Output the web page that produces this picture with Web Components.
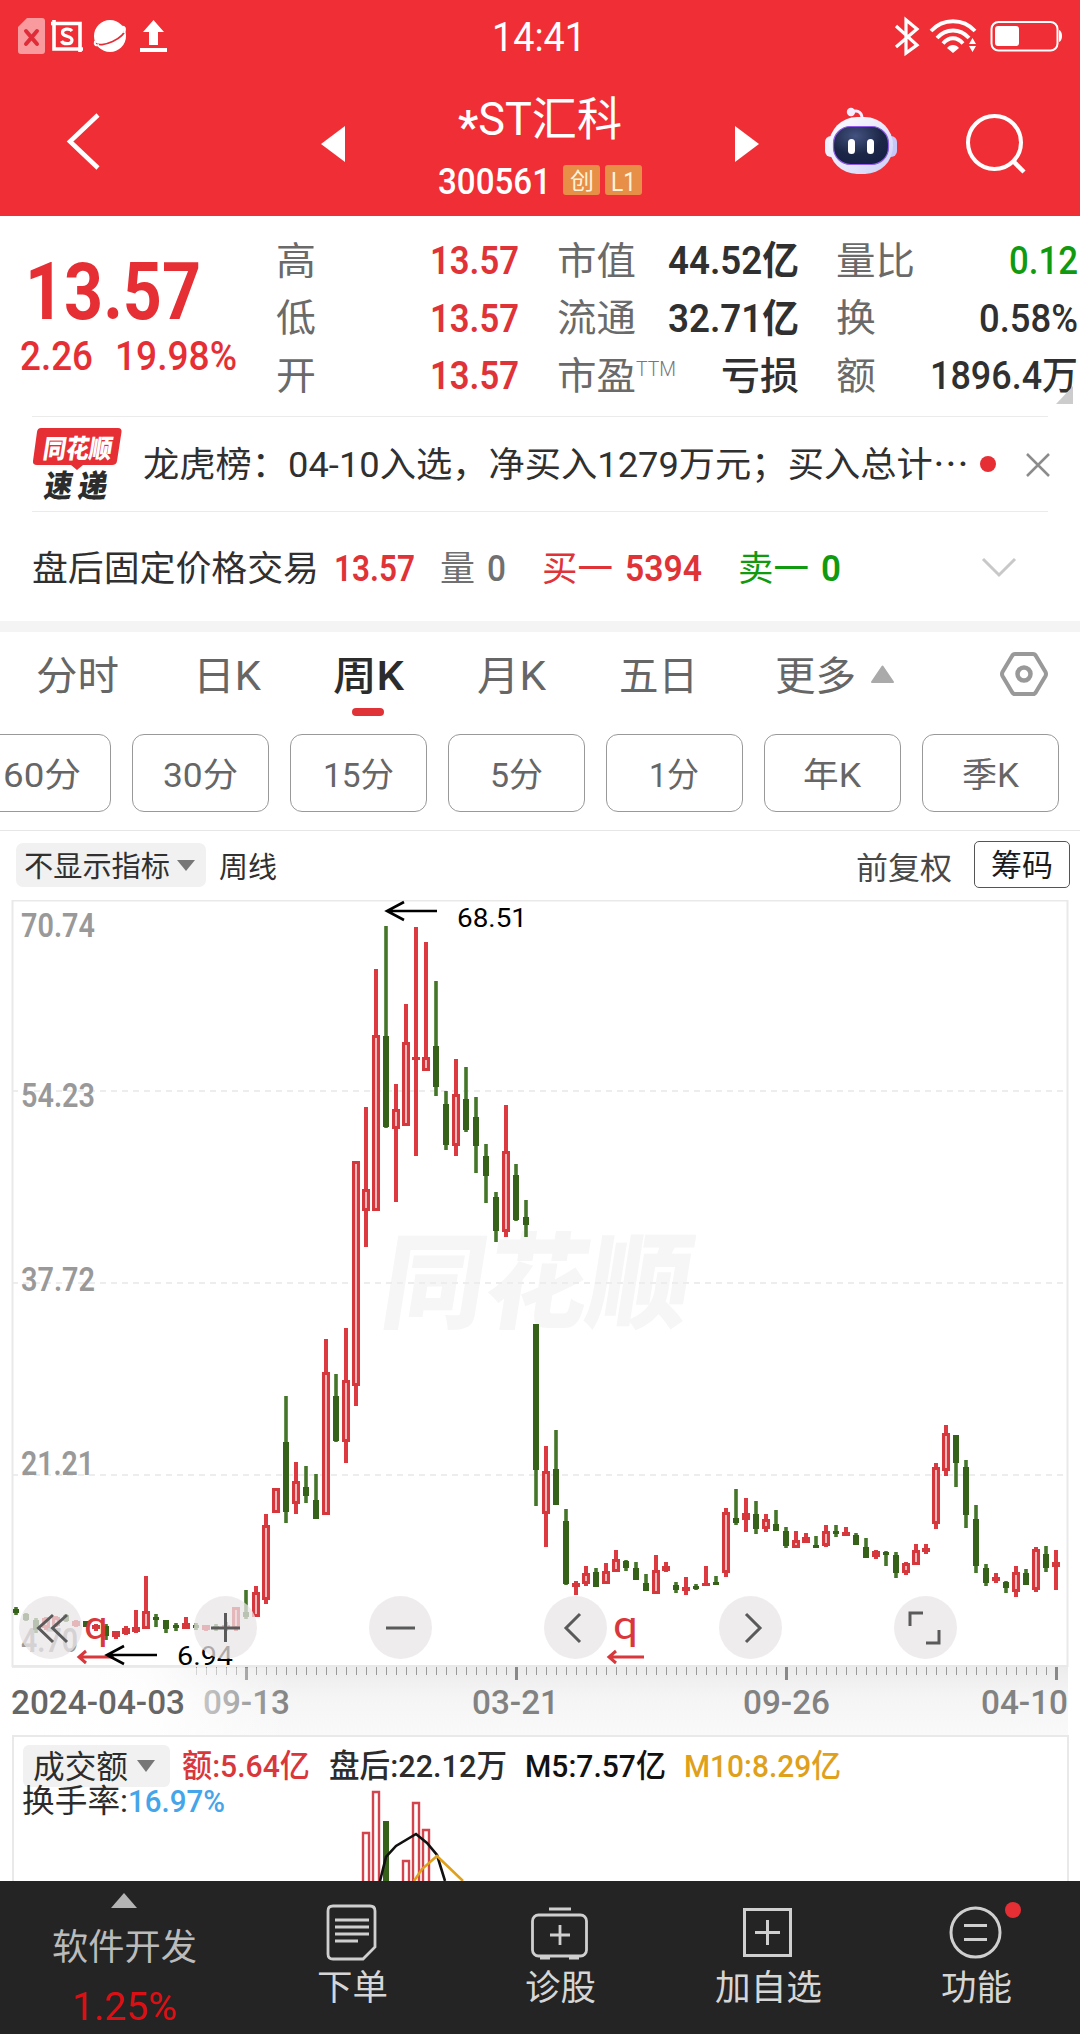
<!DOCTYPE html>
<html lang="zh-CN">
<head>
<meta charset="utf-8">
<title>*ST汇科 300561</title>
<style>
  body {
    margin: 0;
    width: 1080px;
    height: 2034px;
    overflow: hidden;
    background: #fff;
    color: #303030;
    font-family: Roboto, "Noto Sans CJK SC", sans-serif;
  }
</style>
</head>
<body>
<stock-page></stock-page>

<script>
/**
 *
 * FitText
 *  - Element: fit-text
 *  - Description: one line of text set to a fixed advance width
 *  - Attributes: w (width), s (font size), wt (font weight), x (left margin)
 *
 */
class FitText extends HTMLElement {

  connectedCallback() {
    const w = Number(this.getAttribute('w'));
    const size = Number(this.getAttribute('s') || 36);
    const weight = this.getAttribute('wt') || 400;
    const left = this.getAttribute('x') || 0;
    const h = Math.round(size * 1.2);
    const baseline = h / 2 + size * 0.385;

    const shadowRoot = this.attachShadow({mode: 'open'});
    shadowRoot.innerHTML = `
      <style>
        :host { display: block; flex: none; width: ${w}px; height: ${h}px; margin-left: ${left}px; }
        svg { display: block; overflow: visible; }
        text { fill: currentColor; font-size: ${size}px; font-weight: ${weight}; }
      </style>
      <svg width="${w}" height="${h}">
        <text y="${baseline}" textLength="${w}" lengthAdjust="spacingAndGlyphs">${this.innerHTML}</text>
      </svg>
    `;
  }

}
customElements.define('fit-text', FitText);

/**
 *
 * StatusBar
 *  - Element: status-bar
 *  - Description: phone status bar with clock
 *
 */
class StatusBar extends HTMLElement {

  constructor() {
    super();
    this.attachShadow({mode: 'open'}).innerHTML = `
      <style>
        :host { display: flex; align-items: center; height: 72px; color: #fff; }
        svg { display: block; flex: none; }
      </style>
      <svg width="172" height="72" viewBox="0 0 172 72" fill="none">
        <path d="M27 18H42a3 3 0 0 1 3 3V51a3 3 0 0 1-3 3H21a3 3 0 0 1-3-3V27Z" fill="#f89a9e"/>
        <path d="M26 31 37 44M37 31 26 44" stroke="#e02c38" stroke-width="4" stroke-linecap="round"/>
        <path d="M51 23.500H80V52M54 20V49H83" stroke="#fff" stroke-width="3.600"/>
        <path d="M72 31C70 28 62 28.500 62.500 33C63 37 72 35.500 72 40C72 45 63 44.500 61.500 41" stroke="#fff" stroke-width="3.200"/>
        <circle cx="110" cy="36" r="16" fill="#fff"/>
        <path d="M95 43c5 6 32-5 30-15" stroke="#e52c36" stroke-width="1.800"/>
        <path d="M120 27c5-1 6 1 4 6M95 41c-1 4 1 5 4 4" stroke="#fff" stroke-width="2"/>
        <path d="M153.500 20 164 32H158V45H149V32H143Z" fill="#fff"/>
        <path d="M140 50H167" stroke="#fff" stroke-width="4"/>
      </svg>
      <fit-text x="320" w="94" s="40">14:41</fit-text>
      <svg style="margin-left:294px" width="200" height="72" viewBox="880 0 200 72" fill="none" stroke="#fff">
        <path d="M896 26 917 45 906 53V20L917 29 896 47" stroke-width="3.200" stroke-linejoin="miter"/>
        <g stroke-width="3.800">
          <path d="M931 31C943 18 963 18 975 31"/>
          <path d="M937 38C946 28 960 28 969 38"/>
          <path d="M943 43.500C949 36.500 957 36.500 963 43.500"/>
        </g>
        <path d="M947 48C950 44 956 44 959 48L953 53Z" fill="#fff" stroke="none"/>
        <path d="M969 44 972.500 38 976 44ZM969 46 972.500 52 976 46Z" fill="#fff" stroke="none"/>
        <rect x="991.500" y="22" width="66" height="28.500" rx="7" stroke-width="2"/>
        <rect x="995" y="26" width="24" height="20" rx="3" fill="#fff" stroke="none"/>
        <path d="M1059 30C1063 31 1063 41 1059 42Z" fill="#fff" stroke="none"/>
      </svg>
    `;
  }

}
customElements.define('status-bar', StatusBar);

/**
 *
 * StockHeader
 *  - Element: stock-header
 *  - Description: red title bar, name and code are slotted
 *
 */
class StockHeader extends HTMLElement {

  constructor() {
    super();
    this.attachShadow({mode: 'open'}).innerHTML = `
      <style>
        :host { display: block; height: 216px; background: #ef2f35; color: #fff; }
        .bar { display: flex; height: 144px; align-items: flex-start; }
        svg { display: block; flex: none; }
        .title { width: 390px; display: flex; flex-direction: column; align-items: center; padding-top: 18px; box-sizing: border-box; }
        .code { display: flex; align-items: center; gap: 5px; margin-top: 13px; }
        .badge { display: flex; align-items: center; justify-content: center; width: 37px; height: 30px; border-radius: 3px; background: #e78f47; color: #fff3dc; }
        .badge:first-of-type { margin-left: 7px; }
      </style>
      <status-bar></status-bar>
      <div class="bar">
        <svg width="345" height="144" viewBox="0 72 345 144">
          <path d="M98 115 70 141.500 98 168" fill="none" stroke="#fff" stroke-width="4.500"/>
          <path d="M345 126V162L321 144Z" fill="#fff"/>
        </svg>
        <div class="title">
          <slot name="name"></slot>
          <div class="code">
            <slot name="code"></slot>
            <span class="badge"><fit-text w="24" s="23">创</fit-text></span>
            <span class="badge"><fit-text w="25" s="26">L1</fit-text></span>
          </div>
        </div>
        <svg width="345" height="144" viewBox="735 72 345 144">
          <defs>
            <linearGradient id="shell" x1="0" y1="0" x2="1" y2="1">
              <stop offset="0" stop-color="#fff"/><stop offset=".6" stop-color="#e4e4fb"/><stop offset="1" stop-color="#c8cdf5"/>
            </linearGradient>
            <radialGradient id="visor" cx=".4" cy=".25" r=".8">
              <stop offset="0" stop-color="#43527f"/><stop offset=".6" stop-color="#1c2747"/><stop offset="1" stop-color="#161f45"/>
            </radialGradient>
          </defs>
          <path d="M735 126V162L759 144Z" fill="#fff"/>
          <circle cx="851" cy="112" r="4.200" fill="#f6ecff"/>
          <path d="M852 112C858 109 863 113 862 121" fill="none" stroke="#f6ecff" stroke-width="3"/>
          <rect x="825" y="136" width="12" height="21" rx="6" fill="#eef0fc"/>
          <rect x="885" y="136" width="12" height="21" rx="6" fill="#c5c8f8"/>
          <rect x="829" y="117" width="64" height="57" rx="28" fill="url(#shell)"/>
          <rect x="833.500" y="126.500" width="55" height="38" rx="17" fill="url(#visor)" stroke="#8f5be8" stroke-width="1.200"/>
          <rect x="848" y="139" width="7" height="15" rx="3.500" fill="#fff"/>
          <rect x="867" y="139" width="7" height="15" rx="3.500" fill="#fff"/>
          <circle cx="994.500" cy="142.500" r="26.500" fill="none" stroke="#fff" stroke-width="4"/>
          <path d="M1013 161 1024 172" stroke="#fff" stroke-width="4.500"/>
        </svg>
      </div>
    `;
  }

}
customElements.define('stock-header', StockHeader);

/**
 *
 * QuoteStats
 *  - Element: quote-stats
 *  - Description: last price and the table of day figures
 *
 */
class QuoteStats extends HTMLElement {

  constructor() {
    super();
    this.attachShadow({mode: 'open'}).innerHTML = `
      <style>
        :host { display: flex; height: 200px; position: relative; }
        .last { width: 276px; color: #e62f34; padding-top: 24px; box-sizing: border-box; }
        .change { display: flex; margin-top: -5px; }
        .table { display: grid; grid-template-rows: repeat(3, 57.5px); grid-template-columns: 243px 38px 242px 37px 242px; padding-top: 14px; }
        .cell { display: flex; align-items: center; justify-content: space-between; color: #303030; }
        .cell fit-text:first-child { color: #6a6a6a; }
        .up { color: #e03338; }
        .down { color: #109a10; }
        .sup { align-self: flex-start; margin: 10px auto 0 0; color: #777; }
        .corner { position: absolute; left: 1056px; top: 170px; width: 17px; height: 18px; background: #ccc; clip-path: polygon(100% 0, 100% 100%, 0 100%); }
      </style>
      <div class="last">
        <fit-text x="25" w="176" s="80" wt="700">13.57</fit-text>
        <div class="change">
          <fit-text x="20" w="73" s="40" wt="500">2.26</fit-text>
          <fit-text x="22" w="122" s="40" wt="500">19.98%</fit-text>
        </div>
      </div>
      <div class="table">
        <div class="cell"><fit-text w="40" s="38">高</fit-text><fit-text class="up" w="89" s="39" wt="600">13.57</fit-text></div><i></i>
        <div class="cell"><fit-text w="79" s="38">市值</fit-text><fit-text w="131" s="39" wt="600">44.52亿</fit-text></div><i></i>
        <div class="cell"><fit-text w="79" s="38">量比</fit-text><fit-text class="down" w="69" s="39" wt="500">0.12</fit-text></div>
        <div class="cell"><fit-text w="40" s="38">低</fit-text><fit-text class="up" w="89" s="39" wt="600">13.57</fit-text></div><i></i>
        <div class="cell"><fit-text w="79" s="38">流通</fit-text><fit-text w="131" s="39" wt="600">32.71亿</fit-text></div><i></i>
        <div class="cell"><fit-text w="40" s="38">换</fit-text><fit-text w="99" s="39" wt="500">0.58%</fit-text></div>
        <div class="cell"><fit-text w="40" s="38">开</fit-text><fit-text class="up" w="89" s="39" wt="600">13.57</fit-text></div><i></i>
        <div class="cell"><fit-text w="79" s="38">市盈</fit-text><fit-text class="sup" w="40" s="21" wt="300">TTM</fit-text><fit-text w="78" s="38" wt="500">亏损</fit-text></div><i></i>
        <div class="cell"><fit-text w="40" s="38">额</fit-text><fit-text w="148" s="39" wt="500">1896.4万</fit-text></div>
      </div>
      <div class="corner"></div>
    `;
  }

}
customElements.define('quote-stats', QuoteStats);

/**
 *
 * NewsStrip
 *  - Element: news-strip
 *  - Description: one line express news, headline is slotted
 *
 */
class NewsStrip extends HTMLElement {

  constructor() {
    super();
    this.attachShadow({mode: 'open'}).innerHTML = `
      <style>
        :host { display: flex; align-items: center; margin: 0 32px; height: 94px; border: solid #ebebeb; border-width: 1px 0; }
        svg { display: block; flex: none; }
      </style>
      <svg width="90" height="94" viewBox="32 417 90 94">
        <path d="M41 428H118Q122 428 121.500 432L117 461Q116.500 465 112 465H83L77 470 71 465H37Q32.500 465 33 461L37 432Q37.500 428 41 428Z" fill="#e62f34"/>
        <g font-weight="900">
          <text transform="translate(42 458) skewX(-9)" font-size="26" textLength="69" lengthAdjust="spacingAndGlyphs" fill="#fff">同花顺</text>
          <text transform="translate(43 497) skewX(-9)" font-size="31" textLength="28" lengthAdjust="spacingAndGlyphs" fill="#2c2c2c">速</text>
          <text transform="translate(77 497) skewX(-9)" font-size="31" textLength="29" lengthAdjust="spacingAndGlyphs" fill="#2c2c2c">递</text>
        </g>
      </svg>
      <slot></slot>
      <svg style="margin-left:9px" width="82" height="94" viewBox="978 417 82 94">
        <circle cx="988" cy="464" r="8" fill="#e62f34"/>
        <path d="M1027 454 1049 476M1049 454 1027 476" stroke="#8c8c8c" stroke-width="2.500"/>
      </svg>
    `;
  }

}
customElements.define('news-strip', NewsStrip);

/**
 *
 * AfterHours
 *  - Element: after-hours
 *  - Description: after-hours fixed price trading line
 *
 */
class AfterHours extends HTMLElement {

  constructor() {
    super();
    this.attachShadow({mode: 'open'}).innerHTML = `
      <style>
        :host { display: flex; align-items: center; height: 109px; padding-top: 2px; box-sizing: border-box; }
        .up { color: #e03338; }
        .down { color: #109a10; }
        .muted { color: #707070; }
        svg { display: block; margin-left: 140px; }
      </style>
      <fit-text x="32" w="287" s="35.5">盘后固定价格交易</fit-text>
      <fit-text class="up" x="15" w="81" s="36" wt="600">13.57</fit-text>
      <fit-text class="muted" x="25" w="35" s="35">量</fit-text>
      <fit-text class="muted" x="12" w="19" s="36" wt="500">0</fit-text>
      <fit-text class="up" x="36" w="71" s="35">买一</fit-text>
      <fit-text class="up" x="12" w="77" s="36" wt="600">5394</fit-text>
      <fit-text class="down" x="36" w="71" s="35">卖一</fit-text>
      <fit-text class="down" x="12" w="20" s="36" wt="600">0</fit-text>
      <svg width="36" height="22"><path d="M2 2 18 18 34 2" fill="none" stroke="#c8c8c8" stroke-width="3"/></svg>
    `;
  }

}
customElements.define('after-hours', AfterHours);

/**
 *
 * PeriodTabs
 *  - Element: period-tabs
 *  - Description: chart period tabs and the expanded list of periods
 *
 */
class PeriodTabs extends HTMLElement {

  static periods = [['60分', 78], ['30分', 75], ['15分', 71], ['5分', 53], ['1分', 50], ['年K', 58], ['季K', 57]];

  constructor() {
    super();
    this.attachShadow({mode: 'open'}).innerHTML = `
      <style>
        :host { display: block; height: 198px; border-top: 11px solid #f4f4f4; border-bottom: 1px solid #e6e6e6; color: #666; }
        .tabs { display: flex; height: 102px; }
        .tabs fit-text { margin-top: 19px; }
        .active { color: #2c2c2c; width: 71px; margin-left: 72px; }
        .active::after { content: ""; display: block; width: 32px; height: 8px; border-radius: 4px; margin: 9px auto 0; position: relative; left: -1px; background: #e03338; }
        .periods { display: flex; gap: 21px; margin-left: -26px; }
        .periods div { flex: none; box-sizing: border-box; width: 137px; height: 78px; border: 1px solid #999; border-radius: 12px; display: flex; align-items: center; justify-content: center; }
        .periods fit-text { margin-left: -1px; }
        svg { display: block; flex: none; }
      </style>
      <div class="tabs">
        <fit-text x="36" w="83" s="40">分时</fit-text>
        <fit-text x="74" w="68" s="40">日K</fit-text>
        <div class="active"><fit-text w="71" s="40" wt="500">周K</fit-text></div>
        <fit-text x="73" w="69" s="40">月K</fit-text>
        <fit-text x="73" w="79" s="40">五日</fit-text>
        <fit-text x="77" w="81" s="40">更多</fit-text>
        <svg width="200" height="102" viewBox="856 632 200 102">
          <path d="M882.500 666.500 893 682H872Z" fill="#aaa" stroke="#aaa" stroke-width="2" stroke-linejoin="round"/>
          <path d="M1015 654H1033Q1035 654 1036 656L1045.500 672Q1046.500 674 1045.500 676L1036 692Q1035 694 1033 694H1015Q1013 694 1012 692L1002.500 676Q1001.500 674 1002.500 672L1012 656Q1013 654 1015 654Z" fill="none" stroke="#999" stroke-width="4"/>
          <circle cx="1024" cy="674" r="6.500" fill="none" stroke="#999" stroke-width="4.500"/>
        </svg>
      </div>
      <div class="periods">
        ${PeriodTabs.periods.map(([name, w]) => `<div><fit-text x="-2" w="${w}" s="34">${name}</fit-text></div>`).join('')}
      </div>
    `;
  }

}
customElements.define('period-tabs', PeriodTabs);

/**
 *
 * IndicatorBar
 *  - Element: indicator-bar
 *  - Description: indicator picker above the chart
 *
 */
class IndicatorBar extends HTMLElement {

  constructor() {
    super();
    this.attachShadow({mode: 'open'}).innerHTML = `
      <style>
        :host { display: flex; align-items: center; height: 69px; box-sizing: border-box; padding: 0 10px 0 16px; }
        .picker { display: flex; align-items: center; width: 190px; height: 44px; margin-top: -1px; border-radius: 7px; background: #f1f1f1; }
        .picker fit-text, .name { padding-top: 1px; }
        .chips { box-sizing: border-box; width: 96px; height: 47px; margin: -2px 0 0 22px; border: 1.500px solid #555; border-radius: 5px; display: flex; align-items: center; justify-content: center; color: #1c1c1c; }
        .adjust { margin-left: auto; padding-top: 4px; color: #484848; }
      </style>
      <div class="picker">
        <fit-text x="8" w="146" s="29">不显示指标</fit-text>
        <svg style="margin-left:6px" width="20" height="13"><path d="M1 1H19L10 12Z" fill="#777"/></svg>
      </div>
      <fit-text class="name" x="13" w="58" s="29">周线</fit-text>
      <div class="adjust"><fit-text w="96" s="31">前复权</fit-text></div>
      <div class="chips"><fit-text w="62" s="31">筹码</fit-text></div>
    `;
  }

}
customElements.define('indicator-bar', IndicatorBar);

/**
 *
 * CandleChart
 *  - Element: candle-chart
 *  - Description: weekly candles, price scale, date ruler and the zoom buttons
 *
 */
class CandleChart extends HTMLElement {

  // direction, high, body top, body bottom, low; one entry per week, 10px apart
  static candles = `
    g1607,1609,1613,1615 g1613,1614,1620,1621 g1618,1620,1630,1633 r1617,1618,1628,1630 r1616,1617,1626,1627
    g1614,1615,1621,1622 r1620,1621,1626,1627 g1621,1621,1627,1627 r1624,1625,1629,1631 g1624,1626,1636,1640
    r1631,1631,1637,1639 r1626,1628,1634,1635 r1610,1627,1632,1633 r1576,1611,1629,1629 g1614,1617,1620,1627
    g1620,1620,1629,1633 g1623,1625,1628,1631 r1617,1623,1629,1629 g1623,1625,1628,1630 r1625,1625,1630,1631
    g1624,1626,1629,1631 r1622,1625,1629,1631 r1607,1607,1629,1631 g1590,1612,1617,1619 r1586,1592,1617,1617
    r1514,1525,1600,1604 r1488,1488,1513,1513 g1396,1442,1512,1523 r1462,1481,1504,1514 g1466,1487,1496,1503
    g1474,1500,1519,1519 r1339,1372,1515,1515 g1374,1396,1441,1442 r1328,1380,1442,1463 r1161,1161,1386,1406
    r1107,1189,1211,1247 r969,1035,1211,1211 g926,1036,1127,1128 r1084,1109,1129,1202 r1004,1042,1126,1126
    r927,1057,1060,1156 r942,1057,1071,1071 g981,1046,1087,1096 g1091,1104,1145,1150 r1059,1094,1146,1156
    g1067,1099,1130,1132 g1097,1117,1146,1173 g1144,1156,1176,1203 g1192,1197,1231,1242 r1105,1151,1232,1237
    g1164,1175,1220,1221 g1200,1217,1225,1237 g1324,1324,1470,1506 r1446,1471,1514,1547 g1430,1469,1505,1505
    g1509,1521,1584,1585 r1581,1583,1587,1595 r1566,1573,1584,1586 g1568,1572,1587,1587 r1563,1571,1584,1584
    r1550,1559,1572,1572 g1560,1561,1568,1571 g1562,1568,1580,1580 g1574,1583,1591,1591 r1555,1570,1594,1594
    r1562,1566,1571,1572 g1582,1585,1590,1593 r1577,1587,1591,1595 g1584,1586,1589,1590 r1566,1583,1586,1586
    g1576,1582,1585,1585 r1508,1512,1573,1577 g1489,1518,1523,1525 r1498,1513,1520,1532 g1501,1514,1529,1534
    r1514,1519,1529,1532 g1510,1524,1531,1531 g1527,1531,1546,1548 r1531,1540,1548,1548 r1533,1537,1543,1543
    g1536,1545,1548,1548 r1525,1531,1546,1547 g1525,1531,1534,1537 r1527,1532,1536,1536 g1533,1535,1545,1545
    g1538,1547,1558,1558 r1550,1551,1557,1559 g1551,1552,1555,1566 g1552,1555,1573,1578 r1562,1563,1573,1575
    r1544,1550,1565,1565 r1544,1548,1552,1554 r1463,1467,1524,1529 r1425,1433,1471,1476 g1435,1435,1463,1487
    g1460,1467,1515,1528 g1505,1519,1566,1573 g1564,1568,1583,1586 r1573,1577,1581,1583 g1581,1582,1588,1593
    r1566,1572,1592,1597 g1569,1573,1585,1585 r1547,1549,1590,1592 g1546,1554,1568,1572 r1550,1562,1567,1590
  `.trim().split(/\s+/);

  static buttons = [
    'M34 19 19.500 32 34 46M48 19 33.500 32 48 46',
    'M17 32H46M31.500 17V46',
    'M17 32H46',
    'M36 18 22 32 36 46',
    'M27 18 41 32 27 46',
    'M16 30V17H29M45 34V47H32'
  ];

  constructor() {
    super();
    this.attachShadow({mode: 'open'}).innerHTML = `
      <style>
        :host { display: block; position: relative; height: 835px; }
        svg { display: block; }
        .tools { position: absolute; left: 19px; top: 696px; display: flex; gap: 112px; }
        .tools svg { width: 63px; height: 63px; border-radius: 50%; background: rgba(234, 230, 232, .74); }
        .marks { position: absolute; left: 0; top: 0; }
      </style>
      <svg width="1080" height="835" viewBox="0 900 1080 835">
        <defs>
          <linearGradient id="ruler" x1="0" y1="0" x2="0" y2="1">
            <stop offset="0" stop-color="#ececec"/><stop offset=".45" stop-color="#f5f5f5"/><stop offset="1" stop-color="#f9f9f9"/>
          </linearGradient>
          <linearGradient id="fade" x1="0" y1="0" x2="1" y2="0">
            <stop offset="0" stop-color="#fff"/><stop offset=".5" stop-color="#fff" stop-opacity=".9"/><stop offset="1" stop-color="#fff" stop-opacity="0"/>
          </linearGradient>
        </defs>
        <text transform="translate(378 1320) skewX(-9)" font-size="104" font-weight="900" fill="#f6f6f6" textLength="308" lengthAdjust="spacingAndGlyphs">同花顺</text>
        <path d="M12 1091H1067M12 1283H1067M12 1475H1067" stroke="#ededed" stroke-width="2" stroke-dasharray="6 5"/>
        <rect x="12" y="1667" width="1056" height="68" fill="url(#ruler)"/>
        ${this.renderTicks()}
        <g fill="#828282" font-size="33" font-weight="500">
          ${this.label('09-13', 203, 1714, 87)}
          ${this.label('03-21', 472, 1714, 87)}
          ${this.label('09-26', 743, 1714, 87)}
          ${this.label('04-10', 981, 1714, 87)}
        </g>
        <rect x="0" y="1668" width="290" height="67" fill="url(#fade)"/>
        <rect x="12.500" y="900.500" width="1055" height="765.500" fill="none" stroke="#e9e9e9" stroke-width="2"/>
        <text x="11" y="1714" fill="#666" font-size="33" font-weight="500" textLength="174" lengthAdjust="spacingAndGlyphs">2024-04-03</text>
        <g fill="#999" font-size="33" font-weight="600">
          ${this.label('70.74', 21, 937, 74)}
          ${this.label('54.23', 21, 1107, 74)}
          ${this.label('37.72', 21, 1291, 74)}
          ${this.label('21.21', 21, 1475, 73)}
          ${this.label('4.70', 21, 1652, 57)}
        </g>
        ${CandleChart.candles.map((c, i) => this.renderCandle(c, 16 + i * 10)).join('')}
        <g font-size="25.500">
          ${this.label('68.51', 457, 927, 70)}
          ${this.label('6.94', 177, 1665, 56)}
        </g>
      </svg>
      <div class="tools">
        ${CandleChart.buttons.map(d => `<svg viewBox="0 0 63 63" fill="none" stroke="#5a5a5a" stroke-width="3"><path d="${d}"/></svg>`).join('')}
      </div>
      <svg class="marks" width="1080" height="835" viewBox="0 900 1080 835" fill="none">
        <g stroke="#d8373c" stroke-width="3">
          <path d="M114 1657H79M86 1651 79 1657 86 1663"/>
          <path d="M644 1657H609M616 1651 609 1657 616 1663"/>
        </g>
        <g fill="#d8373c" font-size="39">
          <text x="84" y="1639" textLength="24" lengthAdjust="spacingAndGlyphs">q</text>
          <text x="613" y="1639" textLength="25" lengthAdjust="spacingAndGlyphs">q</text>
        </g>
        <g stroke="#000" stroke-width="2.600">
          <path d="M437 911H387M404 902 387 911 404 920"/>
          <path d="M157 1655H107M124 1646 107 1655 124 1664"/>
        </g>
      </svg>
    `;
  }

  label(text, x, y, w) {
    return `<text x="${x}" y="${y}" textLength="${w}" lengthAdjust="spacingAndGlyphs">${text}</text>`;
  }

  renderTicks() {
    let minor = '';
    let major = '';
    for (let x = 196; x <= 1056; x += 10) {
      if ((x - 246) % 270 === 0) {
        major += `M${x + .5} 1667V1680`;
      } else {
        minor += `M${x + .5} 1667V1675`;
      }
    }
    return `<path d="${minor}" stroke="#999"/><path d="${major}" stroke="#888" stroke-width="3"/>`;
  }

  renderCandle(code, x) {
    const [high, top, bottom, low] = code.slice(1).split(',').map(Number);
    if (code[0] === 'g') {
      return `<path d="M${x} ${high}V${low}" stroke="#447529" stroke-width="3.600"/>
        <rect x="${x - 3}" y="${top}" width="6" height="${bottom - top}" fill="#356118"/>`;
    }
    // hollow body only when there is room inside the outline
    const hollow = bottom - top > 7;
    return `<path d="M${x} ${high}V${low}" stroke="#dc3a40" stroke-width="4"/>
      <rect x="${x - 4}" y="${top}" width="8" height="${bottom - top}" fill="#d4383d"/>
      ${hollow ? `<rect x="${x - 1}" y="${top + 3}" width="2" height="${bottom - top - 6}" fill="#fbb8ba"/>` : ''}`;
  }

}
customElements.define('candle-chart', CandleChart);

/**
 *
 * VolumePanel
 *  - Element: volume-panel
 *  - Description: turnover panel, cut by the bottom bar
 *
 */
class VolumePanel extends HTMLElement {

  constructor() {
    super();
    this.attachShadow({mode: 'open'}).innerHTML = `
      <style>
        :host { display: block; position: relative; height: 146px; margin: 0 11.5px; box-sizing: border-box; width: 1057px; border: 2px solid #e9e9e9; border-bottom: 0; color: #2c2c2c; }
        .row { display: flex; align-items: center; height: 42px; padding: 8px 0 0 9px; }
        .row.second { height: 28px; padding: 0 0 0 8px; }
        .picker { display: flex; align-items: center; width: 147px; height: 42px; border-radius: 6px; background: #f1f1f1; }
        .bars { position: absolute; left: 0; top: 0; }
        .rate { color: #45a5ea; }
        .row > fit-text { position: relative; top: -1px; }
      </style>
      <svg class="bars" width="1052" height="144" viewBox="14 1737 1052 144" fill="none">
        <g fill="#fff" stroke="#d4444c" stroke-width="2.400">
          <path d="M363 1900V1833H369V1900M373 1900V1792H379V1900M403 1900V1861H409V1900M413 1900V1803H419V1900M423 1900V1830H429V1900"/>
        </g>
        <rect x="383" y="1821" width="6" height="60" fill="#356118"/>
        <path d="M380 1881 386 1857 396 1846 416 1834 427 1843 437 1855 445 1881" stroke="#111" stroke-width="2.600"/>
        <path d="M414 1881 422 1869 437 1856 463 1881" stroke="#dfa01c" stroke-width="2.600"/>
      </svg>
      <div class="row">
        <div class="picker">
          <fit-text x="10" w="95" s="32">成交额</fit-text>
          <svg style="margin-left:8px" width="20" height="13"><path d="M1 0H19L10 12Z" fill="#777"/></svg>
        </div>
        <fit-text style="color:#d8373c" x="12" w="128" s="32" wt="500">额:5.64亿</fit-text>
        <fit-text x="19" w="178" s="32" wt="500">盘后:22.12万</fit-text>
        <fit-text style="color:#111" x="18" w="141" s="32" wt="500">M5:7.57亿</fit-text>
        <fit-text style="color:#dfa01c" x="18" w="157" s="32" wt="500">M10:8.29亿</fit-text>
      </div>
      <div class="row second">
        <fit-text w="106" s="32">换手率:</fit-text>
        <fit-text class="rate" w="97" s="32" wt="500">16.97%</fit-text>
      </div>
    `;
  }

}
customElements.define('volume-panel', VolumePanel);

/**
 *
 * NavItem
 *  - Element: nav-item
 *  - Description: bottom bar item, icon and label are slotted
 *
 */
class NavItem extends HTMLElement {

  constructor() {
    super();
    this.attachShadow({mode: 'open'}).innerHTML = `
      <style>
        :host { display: flex; flex-direction: column; align-items: center; width: 208px; color: #d6d6d6; }
        ::slotted(svg) { display: block; margin: 21px 0 4px; }
      </style>
      <slot name="icon"></slot>
      <slot></slot>
    `;
  }

}
customElements.define('nav-item', NavItem);

/**
 *
 * BottomNav
 *  - Element: bottom-nav
 *  - Description: sector ticker and the action items
 *
 */
class BottomNav extends HTMLElement {

  constructor() {
    super();
    this.attachShadow({mode: 'open'}).innerHTML = `
      <style>
        :host { display: flex; height: 153px; background: #242424; position: relative; }
        .sector { width: 248px; display: flex; flex-direction: column; align-items: center; color: #bbb; }
        .sector svg { display: block; margin: 12px 0 17px; }
        .sector .up { color: #dc1014; margin-top: 14px; }
      </style>
      <div class="sector">
        <svg width="26" height="15"><path d="M13 0 26 15H0Z" fill="#b4b4b4"/></svg>
        <fit-text w="145" s="36">软件开发</fit-text>
        <fit-text class="up" w="105" s="38">1.25%</fit-text>
      </div>
      <nav-item>
        <svg slot="icon" width="60" height="60" fill="none" stroke="#cfcfcf" stroke-width="2.800">
          <path d="M11 4H48Q53 4 53 9V45L41 57H11Q6 57 6 52V9Q6 4 11 4Z"/>
          <path d="M13 18H47M13 25H47M13 32H47M13 39H36"/>
        </svg>
        <fit-text w="71" s="35">下单</fit-text>
      </nav-item>
      <nav-item>
        <svg slot="icon" width="60" height="60" fill="none" stroke="#cfcfcf" stroke-width="2.800">
          <rect x="2.500" y="13" width="54" height="41" rx="6"/>
          <path d="M19 7H41M30 23V43M20 33H40"/>
          <path d="M10 55.500H20M39 55.500H49" stroke-width="4"/>
        </svg>
        <fit-text w="71" s="35">诊股</fit-text>
      </nav-item>
      <nav-item>
        <svg slot="icon" width="60" height="60" fill="none" stroke="#cfcfcf" stroke-width="3">
          <path d="M6.500 7.500H52.500V53.500H6.500ZM29.500 18V43M17 30.500H42"/>
        </svg>
        <fit-text w="107" s="35">加自选</fit-text>
      </nav-item>
      <nav-item>
        <svg slot="icon" width="60" height="60" fill="none" stroke="#cfcfcf" stroke-width="3" overflow="visible">
          <circle cx="29.500" cy="30.500" r="24.500"/>
          <path d="M18 23.500H41M18 37.500H41"/>
          <circle cx="67" cy="8" r="8" fill="#e62f34" stroke="none"/>
        </svg>
        <fit-text w="71" s="35">功能</fit-text>
      </nav-item>
    `;
  }

}
customElements.define('bottom-nav', BottomNav);

/**
 *
 * StockPage
 *  - Element: stock-page
 *  - Description: stacks the sections of the quote page
 *
 */
class StockPage extends HTMLElement {

  constructor() {
    super();
    this.attachShadow({mode: 'open'}).innerHTML = `
      <style>
        :host { display: flex; flex-direction: column; width: 1080px; height: 2034px; }
        :host > * { flex: none; }
      </style>
      <stock-header>
        <fit-text slot="name" w="164" s="46"><tspan dy="8" font-weight="600">*</tspan><tspan dy="-8">ST汇科</tspan></fit-text>
        <fit-text slot="code" w="113" s="37" wt="500">300561</fit-text>
      </stock-header>
      <quote-stats></quote-stats>
      <news-strip><fit-text x="21" w="826" s="35">龙虎榜：04-10入选，净买入1279万元；买入总计⋯</fit-text></news-strip>
      <after-hours></after-hours>
      <period-tabs></period-tabs>
      <indicator-bar></indicator-bar>
      <candle-chart></candle-chart>
      <volume-panel></volume-panel>
      <bottom-nav></bottom-nav>
    `;
  }

}
customElements.define('stock-page', StockPage);
</script>
</body>
</html>
